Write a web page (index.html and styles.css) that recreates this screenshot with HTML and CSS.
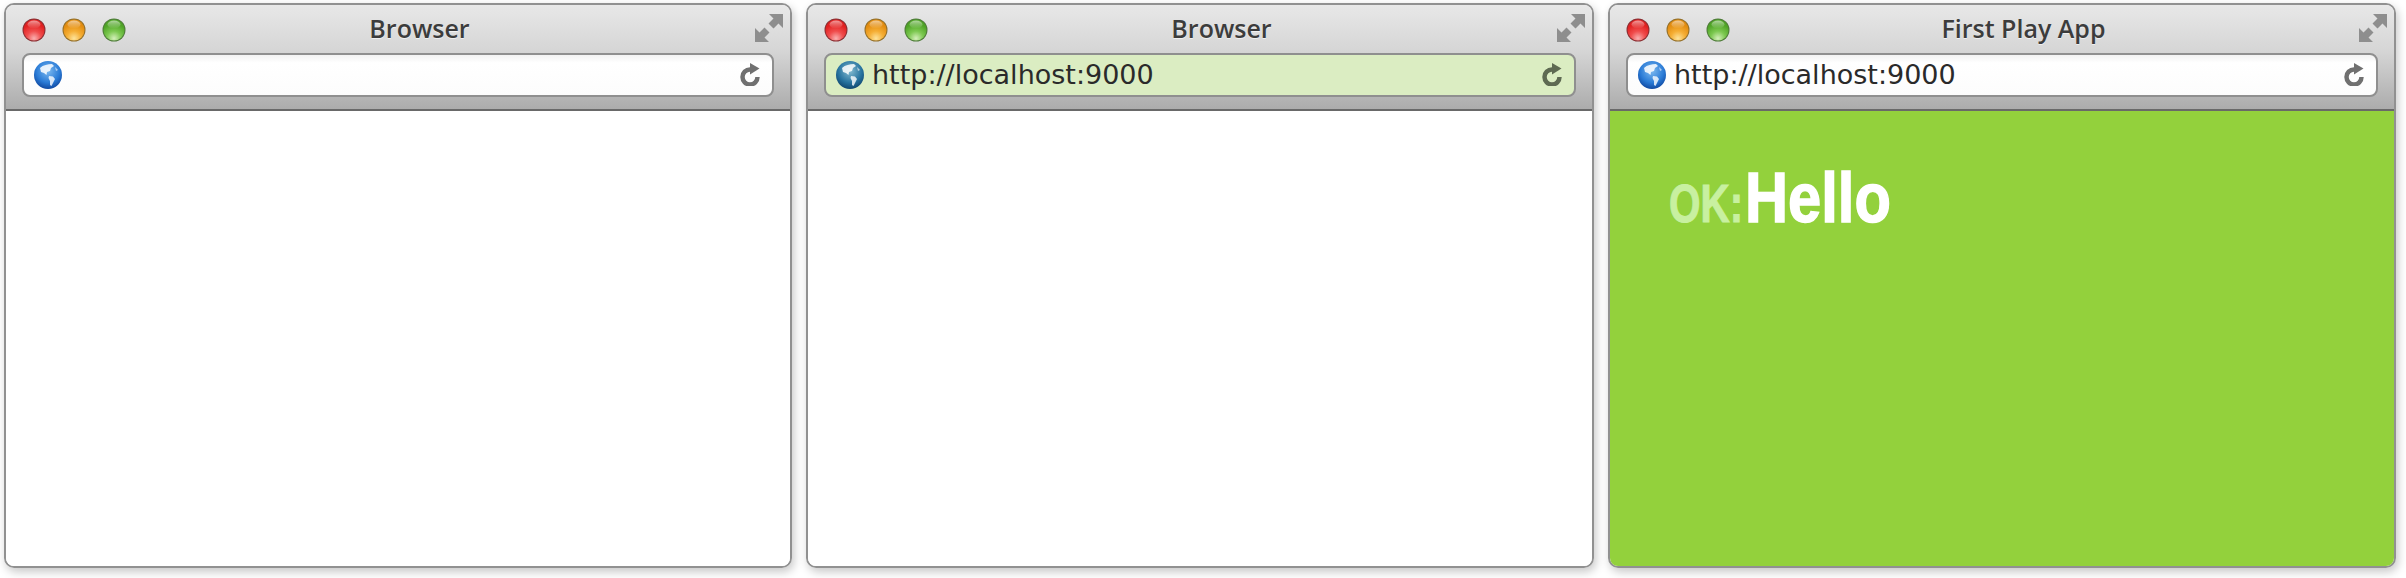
FILE: index.html
```html
<!DOCTYPE html>
<html lang="en">
<head>
    <meta charset="UTF-8">
    <title>Browser windows</title>
    <link rel="stylesheet" href="styles.css">
</head>
<body>

<svg class="defs" width="0" height="0">
    <defs>
        <radialGradient id="redBall" cx="50%" cy="90%" r="70%">
            <stop offset="0" stop-color="#f9b0b0"/>
            <stop offset="0.5" stop-color="#f04c4c"/>
            <stop offset="1" stop-color="#e02020"/>
        </radialGradient>
        <radialGradient id="amberBall" cx="50%" cy="90%" r="70%">
            <stop offset="0" stop-color="#fde39a"/>
            <stop offset="0.5" stop-color="#f5ae34"/>
            <stop offset="1" stop-color="#e28c10"/>
        </radialGradient>
        <radialGradient id="greenBall" cx="50%" cy="90%" r="70%">
            <stop offset="0" stop-color="#d4efba"/>
            <stop offset="0.5" stop-color="#7cc850"/>
            <stop offset="1" stop-color="#4fa426"/>
        </radialGradient>
        <linearGradient id="shine" x1="0" y1="0" x2="0" y2="1">
            <stop offset="0" stop-color="#fff" stop-opacity="0.55"/>
            <stop offset="1" stop-color="#fff" stop-opacity="0"/>
        </linearGradient>
        <radialGradient id="blueGlobe" cx="50%" cy="35%" r="70%">
            <stop offset="0" stop-color="#7dbaf0"/>
            <stop offset="0.6" stop-color="#2a7bd6"/>
            <stop offset="1" stop-color="#0b3f96"/>
        </radialGradient>
        <radialGradient id="tealGlobe" cx="50%" cy="35%" r="70%">
            <stop offset="0" stop-color="#86bdd2"/>
            <stop offset="0.6" stop-color="#27739f"/>
            <stop offset="1" stop-color="#0c3e66"/>
        </radialGradient>
        <symbol id="red" viewBox="0 0 24 24">
            <circle cx="12" cy="12" r="11.5" fill="#8a2f33"/>
            <circle cx="12" cy="12" r="10.500" fill="url(#redBall)"/>
            <ellipse cx="12" cy="6.500" rx="6.500" ry="4" fill="url(#shine)"/>
        </symbol>
        <symbol id="amber" viewBox="0 0 24 24">
            <circle cx="12" cy="12" r="11.5" fill="#94702a"/>
            <circle cx="12" cy="12" r="10.500" fill="url(#amberBall)"/>
            <ellipse cx="12" cy="6.500" rx="6.500" ry="4" fill="url(#shine)"/>
        </symbol>
        <symbol id="green" viewBox="0 0 24 24">
            <circle cx="12" cy="12" r="11.5" fill="#4f7c3a"/>
            <circle cx="12" cy="12" r="10.500" fill="url(#greenBall)"/>
            <ellipse cx="12" cy="6.500" rx="6.500" ry="4" fill="url(#shine)"/>
        </symbol>
        <symbol id="land" viewBox="0 0 28 28">
            <path d="M6 7 C9 4 14 3 18 3 L20 5 L17 7 L16 10 L13 11 L12.500 14 L10 12 L7 11 Z" fill="#fff" fill-opacity="0.85"/>
            <path d="M15 15 L19 15.500 L21 18 L19 22 L17.500 25 L16 24 L16 20 L14.500 17 Z" fill="#fff" fill-opacity="0.8"/>
            <path d="M21 6 L24 9 L22 10 Z" fill="#fff" fill-opacity="0.6"/>
        </symbol>
        <symbol id="expand" viewBox="0 0 28 28">
            <path d="M28 0 V14 L23.500 9.500 L18.500 14.500 L13.500 9.500 L18.500 4.500 L14 0 Z"/>
            <path d="M0 28 V14 L4.500 18.500 L9.500 13.500 L14.500 18.500 L9.500 23.500 L14 28 Z"/>
        </symbol>
        <symbol id="reload" viewBox="0 0 20 24">
            <path d="M10 7.500 A7.500 7.500 0 1 0 17.500 15" fill="none" stroke="currentColor" stroke-width="4.500"/>
            <path d="M10 1 L19.500 6.500 L10 12.500 Z" fill="currentColor"/>
        </symbol>
    </defs>
</svg>

<main class="windows">

    <section class="window">
        <header class="chrome">
            <div class="titlebar">
                <div class="lights">
                    <svg class="light"><use href="#red"/></svg>
                    <svg class="light"><use href="#amber"/></svg>
                    <svg class="light"><use href="#green"/></svg>
                </div>
                <span class="title">Browser</span>
                <svg class="expand"><use href="#expand"/></svg>
            </div>
            <div class="address">
                <svg class="globe" viewBox="0 0 28 28">
                    <circle cx="14" cy="14" r="14" fill="url(#blueGlobe)"/>
                    <use href="#land"/>
                </svg>
                <span class="url"></span>
                <svg class="reload"><use href="#reload"/></svg>
            </div>
        </header>
        <div class="page"></div>
    </section>

    <section class="window">
        <header class="chrome">
            <div class="titlebar">
                <div class="lights">
                    <svg class="light"><use href="#red"/></svg>
                    <svg class="light"><use href="#amber"/></svg>
                    <svg class="light"><use href="#green"/></svg>
                </div>
                <span class="title">Browser</span>
                <svg class="expand"><use href="#expand"/></svg>
            </div>
            <div class="address loading">
                <svg class="globe" viewBox="0 0 28 28">
                    <circle cx="14" cy="14" r="14" fill="url(#tealGlobe)"/>
                    <use href="#land"/>
                </svg>
                <span class="url">http://localhost:9000</span>
                <svg class="reload"><use href="#reload"/></svg>
            </div>
        </header>
        <div class="page"></div>
    </section>

    <section class="window">
        <header class="chrome">
            <div class="titlebar">
                <div class="lights">
                    <svg class="light"><use href="#red"/></svg>
                    <svg class="light"><use href="#amber"/></svg>
                    <svg class="light"><use href="#green"/></svg>
                </div>
                <span class="title">First Play App</span>
                <svg class="expand"><use href="#expand"/></svg>
            </div>
            <div class="address">
                <svg class="globe" viewBox="0 0 28 28">
                    <circle cx="14" cy="14" r="14" fill="url(#blueGlobe)"/>
                    <use href="#land"/>
                </svg>
                <span class="url">http://localhost:9000</span>
                <svg class="reload"><use href="#reload"/></svg>
            </div>
        </header>
        <div class="page done">
            <p class="message"><span class="status">OK:</span><span class="hello">Hello</span></p>
        </div>
    </section>

</main>

</body>
</html>
```

FILE: styles.css
```css
html, body { height: 100%; }
body { margin: 0; background-color: #fff; overflow: hidden; font-family: "DejaVu Sans", sans-serif; }

.defs { position: absolute; }

/* Three windows side by side */
.windows {
    display: grid;
    grid-template-columns: repeat(3, 788px);
    column-gap: 14px;
    padding: 3px 0 0 4px;
}

.window {
    display: flex;
    flex-direction: column;
    box-sizing: border-box;
    height: 565px;
    border: 2px solid #919191;
    border-radius: 10px;
    overflow: hidden;
    box-shadow: 2px 4px 10px rgba(0, 0, 0, 0.22);
}

/* Title bar and address bar */
.chrome {
    box-sizing: border-box;
    height: 106px;
    padding: 0 16px 0 16px;
    background: linear-gradient(#e8e8e8, #d5d5d5 45%, #acacac);
    border-bottom: 2px solid #696969;
}

.titlebar {
    display: flex;
    align-items: center;
    justify-content: space-between;
    height: 46px;
}

.lights { display: flex; gap: 16px; width: 144px; margin-top: 4px; }
.light { width: 24px; height: 24px; }

.title {
    color: #3c3c3c;
    font-family: "Open Sans", sans-serif;
    font-size: 25px;
    font-weight: 600;
    margin-top: 0;
    text-shadow: 0 1px 0 rgba(255, 255, 255, 0.6);
}

.expand { width: 28px; height: 28px; margin: 0 -9px 0 82px; fill: #8e8e8e; }

.address {
    display: flex;
    align-items: center;
    box-sizing: border-box;
    height: 44px;
    margin-top: 2px;
    padding: 0 12px 0 10px;
    border: 2px solid #8f8f8f;
    border-radius: 8px;
    background: linear-gradient(#f2f2f2, #fff 20%, #fcfcfc);
}

.address.loading { background: #dbedc2; }
.address.loading .reload { color: #5e6a52; }

.globe { flex: none; width: 28px; height: 28px; }

.url {
    flex: 1;
    margin-left: 8px;
    color: #2a2a2a;
    font-size: 27px;
    line-height: 30px;
}

.reload { flex: none; width: 20px; height: 24px; margin-top: -2px; color: #707070; }

/* Page area */
.page { flex: 1; background-color: #fff; }
.page.done { background-color: #93d13c; }

/* Wide bold font squeezed to the condensed look of the heading */
.message {
    display: flex;
    align-items: baseline;
    margin: 0;
    padding: 52px 0 0 59px;
    font-family: "Liberation Sans", sans-serif;
    font-weight: 700;
}

.status {
    display: inline-block;
    color: #c8f0a0;
    font-size: 54px;
    line-height: 70px;
    margin-right: -23px;
    transform: scaleX(0.75);
    transform-origin: left;
    -webkit-text-stroke: 1px #c8f0a0;
}

.hello {
    display: inline-block;
    color: #fff;
    font-size: 71px;
    line-height: 70px;
    transform: scaleX(0.84);
    transform-origin: left;
    -webkit-text-stroke: 1.5px #fff;
}
```
